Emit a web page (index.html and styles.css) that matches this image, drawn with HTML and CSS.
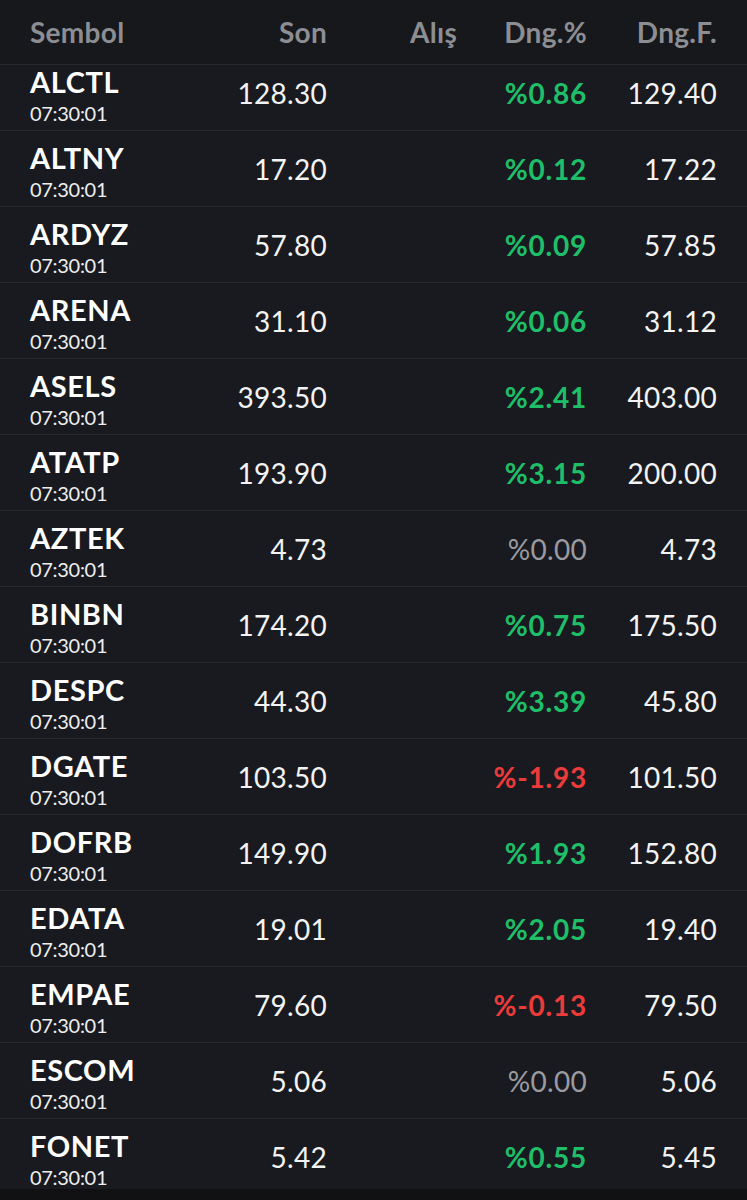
FILE: index.html
```html
<!DOCTYPE html>
<html lang="tr">
<head>
<meta charset="utf-8">
<title>Piyasa</title>
<link rel="stylesheet" href="styles.css">
</head>
<body>
<div class="app">
  <div class="head">
    <div class="sym">Sembol</div>
    <div class="cell">Son</div>
    <div class="cell">Alış</div>
    <div class="cell">Dng.%</div>
    <div class="cell">Dng.F.</div>
  </div>
  <div class="list">
    <div class="row"><div class="sym"><div class="code">ALCTL</div><div class="time">07:30:01</div></div><div class="cell">128.30</div><div class="cell"></div><div class="cell pct up">%0.86</div><div class="cell">129.40</div></div>
    <div class="row"><div class="sym"><div class="code">ALTNY</div><div class="time">07:30:01</div></div><div class="cell">17.20</div><div class="cell"></div><div class="cell pct up">%0.12</div><div class="cell">17.22</div></div>
    <div class="row"><div class="sym"><div class="code">ARDYZ</div><div class="time">07:30:01</div></div><div class="cell">57.80</div><div class="cell"></div><div class="cell pct up">%0.09</div><div class="cell">57.85</div></div>
    <div class="row"><div class="sym"><div class="code">ARENA</div><div class="time">07:30:01</div></div><div class="cell">31.10</div><div class="cell"></div><div class="cell pct up">%0.06</div><div class="cell">31.12</div></div>
    <div class="row"><div class="sym"><div class="code">ASELS</div><div class="time">07:30:01</div></div><div class="cell">393.50</div><div class="cell"></div><div class="cell pct up">%2.41</div><div class="cell">403.00</div></div>
    <div class="row"><div class="sym"><div class="code">ATATP</div><div class="time">07:30:01</div></div><div class="cell">193.90</div><div class="cell"></div><div class="cell pct up">%3.15</div><div class="cell">200.00</div></div>
    <div class="row"><div class="sym"><div class="code">AZTEK</div><div class="time">07:30:01</div></div><div class="cell">4.73</div><div class="cell"></div><div class="cell pct flat">%0.00</div><div class="cell">4.73</div></div>
    <div class="row"><div class="sym"><div class="code">BINBN</div><div class="time">07:30:01</div></div><div class="cell">174.20</div><div class="cell"></div><div class="cell pct up">%0.75</div><div class="cell">175.50</div></div>
    <div class="row"><div class="sym"><div class="code">DESPC</div><div class="time">07:30:01</div></div><div class="cell">44.30</div><div class="cell"></div><div class="cell pct up">%3.39</div><div class="cell">45.80</div></div>
    <div class="row"><div class="sym"><div class="code">DGATE</div><div class="time">07:30:01</div></div><div class="cell">103.50</div><div class="cell"></div><div class="cell pct down">%-1.93</div><div class="cell">101.50</div></div>
    <div class="row"><div class="sym"><div class="code">DOFRB</div><div class="time">07:30:01</div></div><div class="cell">149.90</div><div class="cell"></div><div class="cell pct up">%1.93</div><div class="cell">152.80</div></div>
    <div class="row"><div class="sym"><div class="code">EDATA</div><div class="time">07:30:01</div></div><div class="cell">19.01</div><div class="cell"></div><div class="cell pct up">%2.05</div><div class="cell">19.40</div></div>
    <div class="row"><div class="sym"><div class="code">EMPAE</div><div class="time">07:30:01</div></div><div class="cell">79.60</div><div class="cell"></div><div class="cell pct down">%-0.13</div><div class="cell">79.50</div></div>
    <div class="row"><div class="sym"><div class="code">ESCOM</div><div class="time">07:30:01</div></div><div class="cell">5.06</div><div class="cell"></div><div class="cell pct flat">%0.00</div><div class="cell">5.06</div></div>
    <div class="row"><div class="sym"><div class="code">FONET</div><div class="time">07:30:01</div></div><div class="cell">5.42</div><div class="cell"></div><div class="cell pct up">%0.55</div><div class="cell">5.45</div></div>
  </div>
</div>
</body>
</html>
```
FILE: styles.css
```css
* { box-sizing: border-box; }
html, body { margin: 0; padding: 0; }
body {
  background: #111114;
  font-family: Lato, "Noto Sans", sans-serif;
  color: #f3f3f3;
}
.app {
  height: 1189px;
  overflow: hidden;
  background: #181a1f;
}
.head {
  position: relative;
  z-index: 1;
  display: flex;
  align-items: center;
  height: 65px;
  padding: 0 30px;
  background: #16181c;
  border-bottom: 1px solid #24272c;
  color: #8d8e93;
  font-size: 28px;
  font-weight: 700;
  letter-spacing: 0.3px;
}
.list {
  margin-top: -10px;
}
.row {
  display: flex;
  align-items: center;
  height: 76px;
  padding: 0 30px;
  border-bottom: 1px solid #25282d;
}
.sym {
  flex: 1;
  min-width: 0;
}
.row .sym { padding-top: 6px; }
.cell {
  width: 130px;
  text-align: right;
  font-size: 28px;
  letter-spacing: 0.3px;
}
.code {
  font-size: 29px;
  font-weight: 700;
  line-height: 30px;
  letter-spacing: 0.6px;
  color: #ffffff;
}
.time {
  margin-top: 4px;
  font-size: 20px;
  line-height: 24px;
  letter-spacing: -0.3px;
  color: #eeeeee;
}
.pct { font-weight: 700; letter-spacing: 0.8px; }
.up { color: #1fbf6a; }
.down { color: #ec3b3b; }
.flat { color: #9a9ba0; font-weight: 400; letter-spacing: 0.3px; }
```
